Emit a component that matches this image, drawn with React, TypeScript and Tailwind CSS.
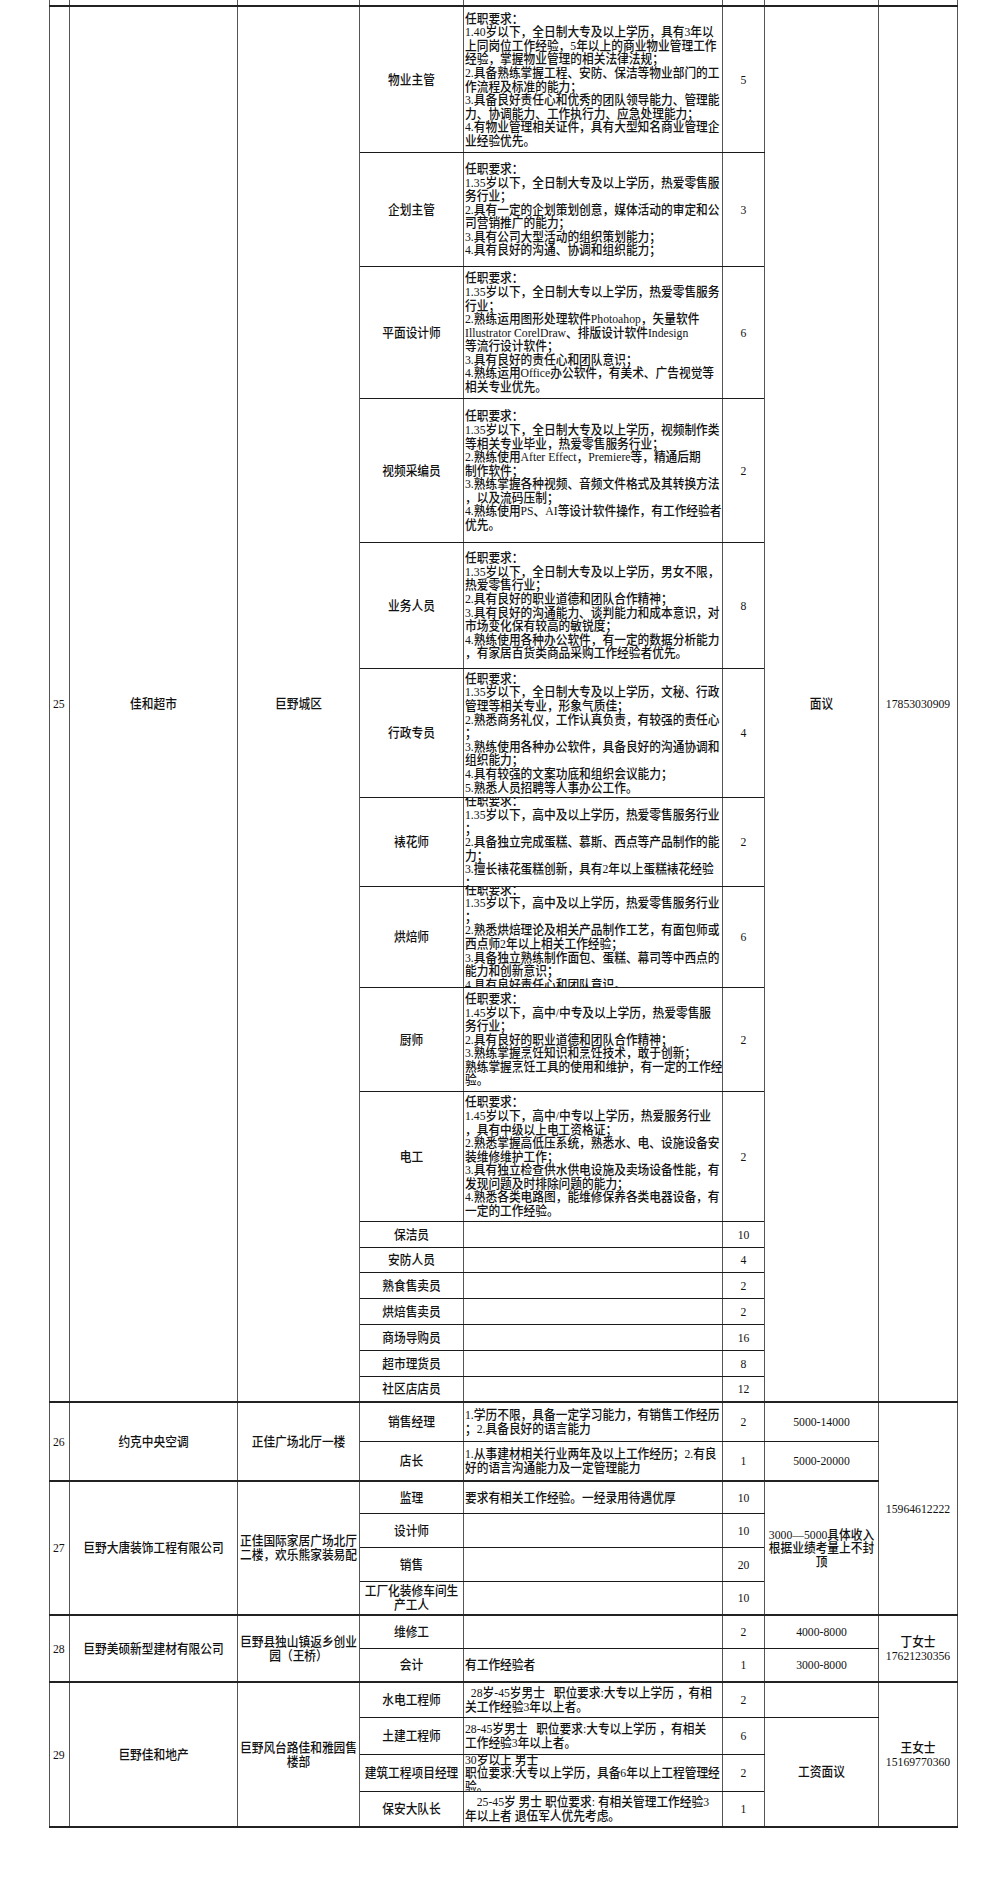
import React from "react";

type Span = { lines: string[]; span: number };
type Sub = {
  pos: string[];
  req: string[];
  n: string;
  h: string;
  salary?: Span;
  contact?: Span;
};
type Group = { no: string; company: string[]; place: string[]; subs: Sub[] };

const groups: Group[] = [
  {
    no: "25",
    company: ["佳和超市"],
    place: ["巨野城区"],
    subs: [
      {
        pos: ["物业主管"],
        n: "5",
        h: "h-[145px]",
        salary: { lines: ["面议"], span: 17 },
        contact: { lines: ["17853030909"], span: 17 },
        req: [
          "任职要求：",
          "1.40岁以下，全日制大专及以上学历，具有3年以",
          "上同岗位工作经验，5年以上的商业物业管理工作",
          "经验，掌握物业管理的相关法律法规；",
          "2.具备熟练掌握工程、安防、保洁等物业部门的工",
          "作流程及标准的能力；",
          "3.具备良好责任心和优秀的团队领导能力、管理能",
          "力、协调能力、工作执行力、应急处理能力；",
          "4.有物业管理相关证件，具有大型知名商业管理企",
          "业经验优先。",
        ],
      },
      {
        pos: ["企划主管"],
        n: "3",
        h: "h-[113px]",
        req: [
          "任职要求：",
          "1.35岁以下，全日制大专及以上学历，热爱零售服",
          "务行业；",
          "2.具有一定的企划策划创意，媒体活动的审定和公",
          "司营销推广的能力；",
          "3.具有公司大型活动的组织策划能力；",
          "4.具有良好的沟通、协调和组织能力；",
        ],
      },
      {
        pos: ["平面设计师"],
        n: "6",
        h: "h-[131px]",
        req: [
          "任职要求：",
          "1.35岁以下，全日制大专以上学历，热爱零售服务",
          "行业；",
          "2.熟练运用图形处理软件Photoahop，矢量软件",
          "Illustrator CorelDraw、排版设计软件Indesign",
          "等流行设计软件；",
          "3.具有良好的责任心和团队意识；",
          "4.熟练运用Office办公软件，有美术、广告视觉等",
          "相关专业优先。",
        ],
      },
      {
        pos: ["视频采编员"],
        n: "2",
        h: "h-[143px]",
        req: [
          "任职要求：",
          "1.35岁以下，全日制大专及以上学历，视频制作类",
          "等相关专业毕业，热爱零售服务行业；",
          "2.熟练使用After Effect，Premiere等，精通后期",
          "制作软件；",
          "3.熟练掌握各种视频、音频文件格式及其转换方法",
          "，以及流码压制；",
          "4.熟练使用PS、AI等设计软件操作，有工作经验者",
          "优先。",
        ],
      },
      {
        pos: ["业务人员"],
        n: "8",
        h: "h-[125px]",
        req: [
          "任职要求：",
          "1.35岁以下，全日制大专及以上学历，男女不限，",
          "热爱零售行业；",
          "2.具有良好的职业道德和团队合作精神；",
          "3.具有良好的沟通能力、谈判能力和成本意识，对",
          "市场变化保有较高的敏锐度；",
          "4.熟练使用各种办公软件，有一定的数据分析能力",
          "，有家居百货类商品采购工作经验者优先。",
        ],
      },
      {
        pos: ["行政专员"],
        n: "4",
        h: "h-[128px]",
        req: [
          "任职要求：",
          "1.35岁以下，全日制大专及以上学历，文秘、行政",
          "管理等相关专业，形象气质佳；",
          "2.熟悉商务礼仪，工作认真负责，有较强的责任心",
          "；",
          "3.熟练使用各种办公软件，具备良好的沟通协调和",
          "组织能力；",
          "4.具有较强的文案功底和组织会议能力；",
          "5.熟悉人员招聘等人事办公工作。",
        ],
      },
      {
        pos: ["裱花师"],
        n: "2",
        h: "h-[88px]",
        req: [
          "任职要求：",
          "1.35岁以下，高中及以上学历，热爱零售服务行业",
          "；",
          "2.具备独立完成蛋糕、慕斯、西点等产品制作的能",
          "力；",
          "3.擅长裱花蛋糕创新，具有2年以上蛋糕裱花经验",
          "；",
        ],
      },
      {
        pos: ["烘焙师"],
        n: "6",
        h: "h-[100px]",
        req: [
          "任职要求：",
          "1.35岁以下，高中及以上学历，热爱零售服务行业",
          "；",
          "2.熟悉烘焙理论及相关产品制作工艺，有面包师或",
          "西点师2年以上相关工作经验；",
          "3.具备独立熟练制作面包、蛋糕、幕司等中西点的",
          "能力和创新意识；",
          "4.具有良好责任心和团队意识。",
        ],
      },
      {
        pos: ["厨师"],
        n: "2",
        h: "h-[103px]",
        req: [
          "任职要求：",
          "1.45岁以下，高中/中专及以上学历，热爱零售服",
          "务行业；",
          "2.具有良好的职业道德和团队合作精神；",
          "3.熟练掌握烹饪知识和烹饪技术，敢于创新；",
          "熟练掌握烹饪工具的使用和维护，有一定的工作经",
          "验。",
        ],
      },
      {
        pos: ["电工"],
        n: "2",
        h: "h-[129px]",
        req: [
          "任职要求：",
          "1.45岁以下，高中/中专以上学历，热爱服务行业",
          "，具有中级以上电工资格证；",
          "2.熟悉掌握高低压系统，熟悉水、电、设施设备安",
          "装维修维护工作；",
          "3.具有独立检查供水供电设施及卖场设备性能，有",
          "发现问题及时排除问题的能力；",
          "4.熟悉各类电路图，能维修保养各类电器设备，有",
          "一定的工作经验。",
        ],
      },
      { pos: ["保洁员"], n: "10", h: "h-[25px]", req: [] },
      { pos: ["安防人员"], n: "4", h: "h-[24px]", req: [] },
      { pos: ["熟食售卖员"], n: "2", h: "h-[25px]", req: [] },
      { pos: ["烘焙售卖员"], n: "2", h: "h-[25px]", req: [] },
      { pos: ["商场导购员"], n: "16", h: "h-[25px]", req: [] },
      { pos: ["超市理货员"], n: "8", h: "h-[25px]", req: [] },
      { pos: ["社区店店员"], n: "12", h: "h-[24px]", req: [] },
    ],
  },
  {
    no: "26",
    company: ["约克中央空调"],
    place: ["正佳广场北厅一楼"],
    subs: [
      {
        pos: ["销售经理"],
        n: "2",
        h: "h-[38px]",
        salary: { lines: ["5000-14000"], span: 1 },
        contact: { lines: ["15964612222"], span: 6 },
        req: ["1.学历不限，具备一定学习能力，有销售工作经历", "；2.具备良好的语言能力"],
      },
      {
        pos: ["店长"],
        n: "1",
        h: "h-[38px]",
        salary: { lines: ["5000-20000"], span: 1 },
        req: ["1.从事建材相关行业两年及以上工作经历；2.有良", "好的语言沟通能力及一定管理能力"],
      },
    ],
  },
  {
    no: "27",
    company: ["巨野大唐装饰工程有限公司"],
    place: ["正佳国际家居广场北厅", "二楼，欢乐熊家装易配"],
    subs: [
      {
        pos: ["监理"],
        n: "10",
        h: "h-[31px]",
        salary: { lines: ["3000—5000具体收入", "根据业绩考量上不封", "顶"], span: 4 },
        req: ["要求有相关工作经验。一经录用待遇优厚"],
      },
      { pos: ["设计师"], n: "10", h: "h-[33px]", req: [] },
      { pos: ["销售"], n: "20", h: "h-[33px]", req: [] },
      { pos: ["工厂化装修车间生", "产工人"], n: "10", h: "h-[32px]", req: [] },
    ],
  },
  {
    no: "28",
    company: ["巨野美硕新型建材有限公司"],
    place: ["巨野县独山镇返乡创业", "园（王桥）"],
    subs: [
      {
        pos: ["维修工"],
        n: "2",
        h: "h-[32px]",
        salary: { lines: ["4000-8000"], span: 1 },
        contact: { lines: ["丁女士", "17621230356"], span: 2 },
        req: [],
      },
      {
        pos: ["会计"],
        n: "1",
        h: "h-[32px]",
        salary: { lines: ["3000-8000"], span: 1 },
        req: ["有工作经验者"],
      },
    ],
  },
  {
    no: "29",
    company: ["巨野佳和地产"],
    place: ["巨野风台路佳和雅园售", "楼部"],
    subs: [
      {
        pos: ["水电工程师"],
        n: "2",
        h: "h-[34px]",
        salary: { lines: [""], span: 1 },
        contact: { lines: ["王女士", "15169770360"], span: 4 },
        req: ["  28岁-45岁男士   职位要求:大专以上学历 ，有相", "关工作经验3年以上者。"],
      },
      {
        pos: ["土建工程师"],
        n: "6",
        h: "h-[36px]",
        salary: { lines: ["工资面议"], span: 3 },
        req: ["28-45岁男士   职位要求:大专以上学历 ，有相关", "工作经验3年以上者。"],
      },
      {
        pos: ["建筑工程项目经理"],
        n: "2",
        h: "h-[36px]",
        req: ["30岁以上 男士", "职位要求:大专以上学历，具备6年以上工程管理经", "验。"],
      },
      {
        pos: ["保安大队长"],
        n: "1",
        h: "h-[34px]",
        req: ["    25-45岁 男士 职位要求: 有相关管理工作经验3", "年以上者 退伍军人优先考虑。"],
      },
    ],
  },
];

const bd = "border border-solid border-x-[#555] border-y-[#1a1a1a] p-0 align-middle";

// the sheet's type is narrow and tall, so each line is squeezed sideways; fixed pitch per line
const Lines = ({ lines, center = false }: { lines: string[]; center?: boolean }) => (
  <>
    {lines.map((l, i) =>
      center ? (
        <div key={i} className="flex h-[13.6px] w-full shrink-0 justify-center whitespace-pre leading-[13.6px] origin-center scale-x-[0.9]">
          <span className="shrink-0">{l}</span>
        </div>
      ) : (
        <div key={i} className="h-[13.6px] shrink-0 whitespace-pre leading-[13.6px] origin-left scale-x-[0.9]">
          {l}
        </div>
      )
    )}
  </>
);

const App: React.FC = () => {
  return (
    <div className="w-full h-[1878px] bg-white text-[#111] text-[13px] font-medium leading-[13.6px] font-['Liberation_Serif','Noto_Sans_CJK_SC',serif]">
      <table className="ml-[49px] w-[908px] table-fixed border-collapse border-b-2 border-b-[#222]">
        <colgroup>
          <col className="w-[20px]" />
          <col className="w-[168px]" />
          <col className="w-[122px]" />
          <col className="w-[104px]" />
          <col className="w-[259px]" />
          <col className="w-[42px]" />
          <col className="w-[114px]" />
          <col className="w-[79px]" />
        </colgroup>
        <tbody>
          <tr>
            {[0, 1, 2, 3, 4, 5, 6, 7].map((i) => (
              <td key={i} className={`${bd} border-t-0`}>
                <div className="h-[5px]" />
              </td>
            ))}
          </tr>
          {groups.map((g, gi) =>
            g.subs.map((s, si) => {
              const top = si === 0 ? " border-t-2 border-t-[#222]" : "";
              return (
                <tr key={`${gi}-${si}`}>
                  {si === 0 && (
                    <>
                      <td rowSpan={g.subs.length} className={`${bd}${top} pl-[3px]`}>
                        <Lines lines={[g.no]} />
                      </td>
                      <td rowSpan={g.subs.length} className={`${bd}${top} px-1`}>
                        <Lines lines={g.company} center />
                      </td>
                      <td rowSpan={g.subs.length} className={`${bd}${top} px-[2px]`}>
                        <Lines lines={g.place} center />
                      </td>
                    </>
                  )}
                  <td className={`${bd}${top}`}>
                    <div className={`${s.h} flex flex-col justify-center overflow-hidden`}>
                      <Lines lines={s.pos} center />
                    </div>
                  </td>
                  <td className={`${bd}${top}`}>
                    <div className={`${s.h} flex flex-col justify-center overflow-hidden pl-px`}>
                      <Lines lines={s.req} />
                    </div>
                  </td>
                  <td className={`${bd}${top}`}>
                    <div className={`${s.h} flex flex-col justify-center overflow-hidden`}>
                      <Lines lines={[s.n]} center />
                    </div>
                  </td>
                  {s.salary && (
                    <td rowSpan={s.salary.span} className={`${bd}${top}`}>
                      <Lines lines={s.salary.lines} center />
                    </td>
                  )}
                  {s.contact && (
                    <td rowSpan={s.contact.span} className={`${bd}${top}`}>
                      <Lines lines={s.contact.lines} center />
                    </td>
                  )}
                </tr>
              );
            })
          )}
        </tbody>
      </table>
    </div>
  );
};

export default App;
